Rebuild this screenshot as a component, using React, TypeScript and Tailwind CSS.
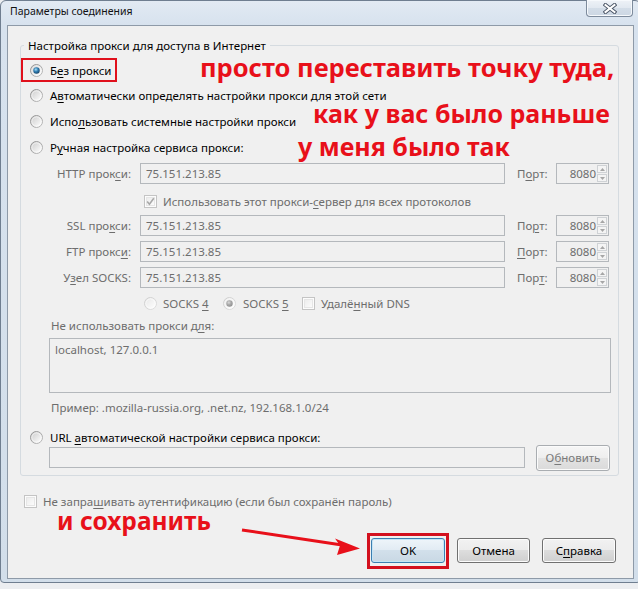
import React from "react";

const UI = "font-['Noto_Sans',sans-serif]";
const RED = "font-['Noto_Sans',sans-serif] font-bold text-[#e8101a] leading-[20px] whitespace-nowrap";

function U({ children }: { children: React.ReactNode }) {
  return <span className="underline decoration-1 underline-offset-[2px]">{children}</span>;
}

function Radio({ checked = false, disabled = false }: { checked?: boolean; disabled?: boolean }) {
  const id = disabled ? (checked ? "rdc" : "rd") : checked ? "rec" : "re";
  return (
    <svg width="13" height="13" viewBox="0 0 13 13" className="shrink-0">
      <defs>
        <linearGradient id={id + "o"} x1="0" y1="0" x2="1" y2="1">
          <stop offset="0" stopColor={disabled ? "#cdcdcd" : "#8e8e8e"} />
          <stop offset="1" stopColor={disabled ? "#dedede" : "#bdbdbd"} />
        </linearGradient>
        <linearGradient id={id + "f"} x1="0.1" y1="0.1" x2="0.9" y2="0.9">
          <stop offset="0" stopColor={disabled ? "#e9e9e9" : "#cfcfcf"} />
          <stop offset="1" stopColor="#fdfdfd" />
        </linearGradient>
        <radialGradient id={id + "d"} cx="0.4" cy="0.35" r="0.75">
          <stop offset="0" stopColor={disabled ? "#dadada" : "#a9e0f7"} />
          <stop offset="0.45" stopColor={disabled ? "#a9a9a9" : "#2f7db2"} />
          <stop offset="1" stopColor={disabled ? "#8a8a8a" : "#143a5c"} />
        </radialGradient>
      </defs>
      <circle cx="6.5" cy="6.5" r="6" fill={`url(#${id}f)`} stroke={`url(#${id}o)`} strokeWidth="1" />
      <circle cx="6.5" cy="6.5" r="4.6" fill="none" stroke="#ffffff" strokeOpacity="0.55" strokeWidth="1" />
      {checked && <circle cx="6.5" cy="6.5" r="3.2" fill={`url(#${id}d)`} />}
    </svg>
  );
}

function Check({ checked = false, disabled = false }: { checked?: boolean; disabled?: boolean }) {
  const id = disabled ? "cbd" : "cbe";
  return (
    <svg width="13" height="13" viewBox="0 0 13 13" className="shrink-0">
      <defs>
        <linearGradient id={id + "f"} x1="0" y1="0" x2="1" y2="1">
          <stop offset="0" stopColor={disabled ? "#ececec" : "#dadada"} />
          <stop offset="1" stopColor="#fcfcfc" />
        </linearGradient>
      </defs>
      <rect x="0.5" y="0.5" width="12" height="12" fill="#fcfcfc" stroke={disabled ? "#c4c4c4" : "#8e8f8f"} />
      <rect x="2.5" y="2.5" width="8" height="8" fill={`url(#${id}f)`} stroke={disabled ? "#e6e6e6" : "#c9c9c9"} />
      {checked && (
        <path d="M3.2 6.6 L5.4 9.2 L9.8 3.2" fill="none" stroke={disabled ? "#a8a8a8" : "#1e395b"} strokeWidth="1.6" />
      )}
    </svg>
  );
}

function Field({ className, value = "" }: { className: string; value?: string }) {
  return (
    <div className={`h-[21px] shrink-0 border border-[#b4b8bc] bg-[#f0f0f0] flex items-center pl-[5px] text-[#6d6d6d] ${className}`}>
      {value}
    </div>
  );
}

function Port() {
  return (
    <div className="w-[53px] h-[21px] shrink-0 border border-[#b4b8bc] flex items-stretch">
      <div className="flex-1 flex items-center justify-end pr-[1px] text-[#6d6d6d]">8080</div>
      <div className="w-[11px] flex flex-col py-[1px] pr-[1px] gap-[1px]">
        <div className="flex-1 border border-[#cfd2d5] bg-[#f4f4f4] flex items-center justify-center">
          <svg width="5" height="3" viewBox="0 0 5 3"><path d="M0 3 L2.5 0 L5 3Z" fill="#a6a6a6" /></svg>
        </div>
        <div className="flex-1 border border-[#cfd2d5] bg-[#f4f4f4] flex items-center justify-center">
          <svg width="5" height="3" viewBox="0 0 5 3"><path d="M0 0 L2.5 3 L5 0Z" fill="#a6a6a6" /></svg>
        </div>
      </div>
    </div>
  );
}

function ProxyRow({ label, port }: { label: React.ReactNode; port: React.ReactNode }) {
  return (
    <div className="flex items-center h-[21px]">
      <div className="w-[110px] text-right text-[#6d6d6d] shrink-0">{label}</div>
      <Field className="ml-[9px] w-[365px]" value="75.151.213.85" />
      <div className="ml-[12px] w-[39px] shrink-0 text-[#6d6d6d]">{port}</div>
      <Port />
    </div>
  );
}

function Btn({
  children,
  className = "",
  variant = "normal",
}: {
  children: React.ReactNode;
  className?: string;
  variant?: "normal" | "default" | "disabled";
}) {
  const v =
    variant === "default"
      ? "border-[#3c7fb1] bg-[linear-gradient(#eef5fa,#e1ebf3_50%,#d2e0eb_50%,#c9d8e4)] shadow-[inset_0_0_0_1px_#c4e5f6] text-black"
      : variant === "disabled"
      ? "border-[#a9adb1] bg-[linear-gradient(#f6f6f6,#eeeeee_50%,#e3e3e3_50%,#dadada)] shadow-[inset_0_0_0_1px_#fbfbfb] text-[#7a7a7a]"
      : "border-[#707070] bg-[linear-gradient(#f2f2f2,#ebebeb_50%,#dddddd_50%,#cfcfcf)] shadow-[inset_0_0_0_1px_#fcfcfc] text-black";
  return (
    <div className={`shrink-0 rounded-[3px] border flex items-center justify-center ${v} ${className}`}>{children}</div>
  );
}

export default function App() {
  return (
    <div className={`relative w-[638px] h-[589px] overflow-hidden bg-[#eceef1] ${UI} text-[11.5px] leading-[15px] text-black`}>
      {/* window */}
      <div className="w-[641px] h-[583px] border border-[#6f7e90] rounded-t-[6px] rounded-b-[4px] bg-[linear-gradient(#e2eaf3,#d7e2ee_24px,#d2deea)] flex flex-col pl-[6px] pr-[6px] pb-[3px]">
        {/* title bar */}
        <div className="h-[24px] shrink-0 flex items-start justify-between">
          <div className="pt-[3px] pl-[3px] text-[#111] text-[10.5px]">Параметры соединения</div>
          <div className="mr-[1px] -mt-[1px] w-[47px] h-[17px] rounded-b-[4px] border border-t-0 border-[#7d8b9c] bg-[linear-gradient(#eef2f7,#e1e8f0_50%,#d3dde8_50%,#ccd7e3)] shadow-[inset_0_0_0_1px_#f6f9fc] flex items-center justify-center">
            <svg width="14" height="11" viewBox="0 0 14 11">
              <path d="M2.5 2 L11.5 9 M11.5 2 L2.5 9" stroke="#4a5566" strokeWidth="4" strokeLinecap="square" fill="none" />
              <path d="M2.5 2 L11.5 9 M11.5 2 L2.5 9" stroke="#ffffff" strokeWidth="2" strokeLinecap="square" fill="none" />
            </svg>
          </div>
        </div>

        {/* client */}
        <div className="flex-1 border border-[#8e9aa8] bg-[#f0f0f0] flex flex-col">
          <fieldset className="ml-[12px] mt-[12px] w-[599px] border border-[#d5dbe0] rounded-[3px] p-0 pb-[7px]">
            <legend className="ml-[3px] px-[4px] text-black">Настройка прокси для доступа в Интернет</legend>
            <div className="pt-[4px] flex flex-col">
              <div className="h-[26px] flex items-center pl-[9px]">
                <Radio checked />
                <span className="ml-[7px]">Б<U>е</U>з прокси</span>
              </div>
              <div className="h-[25px] flex items-center pl-[9px]">
                <Radio />
                <span className="ml-[7px]">А<U>в</U>томатически определять настройки прокси для этой сети</span>
              </div>
              <div className="h-[26px] flex items-center pl-[9px]">
                <Radio />
                <span className="ml-[7px]">Испо<U>л</U>ьзовать системные настройки прокси</span>
              </div>
              <div className="h-[27px] flex items-center pl-[9px]">
                <Radio />
                <span className="ml-[7px]">Р<U>у</U>чная настройка сервиса прокси:</span>
              </div>
              <div className="mt-[2px]">
                <ProxyRow label={<>HTTP прок<U>с</U>и:</>} port={<>П<U>о</U>рт:</>} />
              </div>
              <div className="h-[31px] pt-[3px] flex items-center pl-[123px]">
                <Check checked disabled />
                <span className="ml-[6px] text-[#6d6d6d]">Использовать этот прокси-<U>с</U>ервер для всех протоколов</span>
              </div>
              <ProxyRow label={<>SSL про<U>к</U>си:</>} port={<>По<U>р</U>т:</>} />
              <div className="mt-[5px]">
                <ProxyRow label={<>FTP прокс<U>и</U>:</>} port={<><U>П</U>орт:</>} />
              </div>
              <div className="mt-[5px]">
                <ProxyRow label={<>У<U>з</U>ел SOCKS:</>} port={<>Пор<U>т</U>:</>} />
              </div>
              <div className="h-[30px] flex items-center pl-[123px] text-[#6d6d6d]">
                <div className="w-[79px] flex items-center">
                  <Radio disabled />
                  <span className="ml-[6px]">SOCKS <U>4</U></span>
                </div>
                <div className="w-[79px] flex items-center">
                  <Radio checked disabled />
                  <span className="ml-[7px]">SOCKS <U>5</U></span>
                </div>
                <div className="flex items-center">
                  <Check disabled />
                  <span className="ml-[6px]">Удалё<U>н</U>ный DNS</span>
                </div>
              </div>
              <div className="h-[14px] flex items-center pl-[30px] text-[#6d6d6d]">
                Не использовать прокси д<U>л</U>я:
              </div>
              <div className="mt-[6px] ml-[28px] w-[562px] h-[55px] border border-[#b4b8bc] pl-[5px] pt-[3px] text-[#6d6d6d]">
                localhost, 127.0.0.1
              </div>
              <div className="h-[28px] flex items-center pl-[30px] text-[#6d6d6d]">
                Пример: .mozilla-russia.org, .net.nz, 192.168.1.0/24
              </div>
              <div className="mt-[7px] h-[19px] flex items-center pl-[9px]">
                <Radio />
                <span className="ml-[7px]">URL <U>а</U>втоматической настройки сервиса прокси:</span>
              </div>
              <div className="h-[21px] flex items-center pl-[28px]">
                <Field className="w-[476px]" />
                <Btn variant="disabled" className="ml-[11px] w-[74px] h-[26px]">
                  О<U>б</U>новить
                </Btn>
              </div>
            </div>
          </fieldset>

          <div className="mt-[18px] h-[14px] flex items-center pl-[16px] text-[#6d6d6d]">
            <Check disabled />
            <span className="ml-[6px]">Не запра<U>ш</U>ивать аутентификацию (если был сохранён пароль)</span>
          </div>

          <div className="mt-[30px] h-[25px] flex justify-end gap-[12px] pr-[17px]">
            <Btn variant="default" className="w-[74px] h-[25px]">OK</Btn>
            <Btn className="w-[73px] h-[25px]">Отмена</Btn>
            <Btn className="w-[74px] h-[25px]">
              С<U>п</U>равка
            </Btn>
          </div>
        </div>
      </div>

      {/* annotations */}
      <div className="absolute left-[21px] top-[58px] w-[96px] h-[24px] border-2 border-[#e0101c]" />
      <div className="absolute left-[367px] top-[533px] w-[82px] h-[36px] border-[3px] border-[#d3101e]" />
      <div className={`absolute left-[200px] top-[57px] text-[25.5px] ${RED}`}>просто переставить точку туда,</div>
      <div className={`absolute left-[313px] top-[103px] text-[25px] ${RED}`}>как у вас было раньше</div>
      <div className={`absolute left-[298px] top-[136px] text-[25px] ${RED}`}>у меня было так</div>
      <div className={`absolute left-[57px] top-[511px] text-[24.5px] ${RED}`}>и сохранить</div>
      <svg className="absolute left-0 top-0" width="638" height="589" viewBox="0 0 638 589">
        <path d="M242 530 L342 545" stroke="#e8101a" strokeWidth="3" fill="none" />
        <path d="M360 548.5 L335 538.5 L340 545.5 L337 555 Z" fill="#e8101a" />
      </svg>
    </div>
  );
}
